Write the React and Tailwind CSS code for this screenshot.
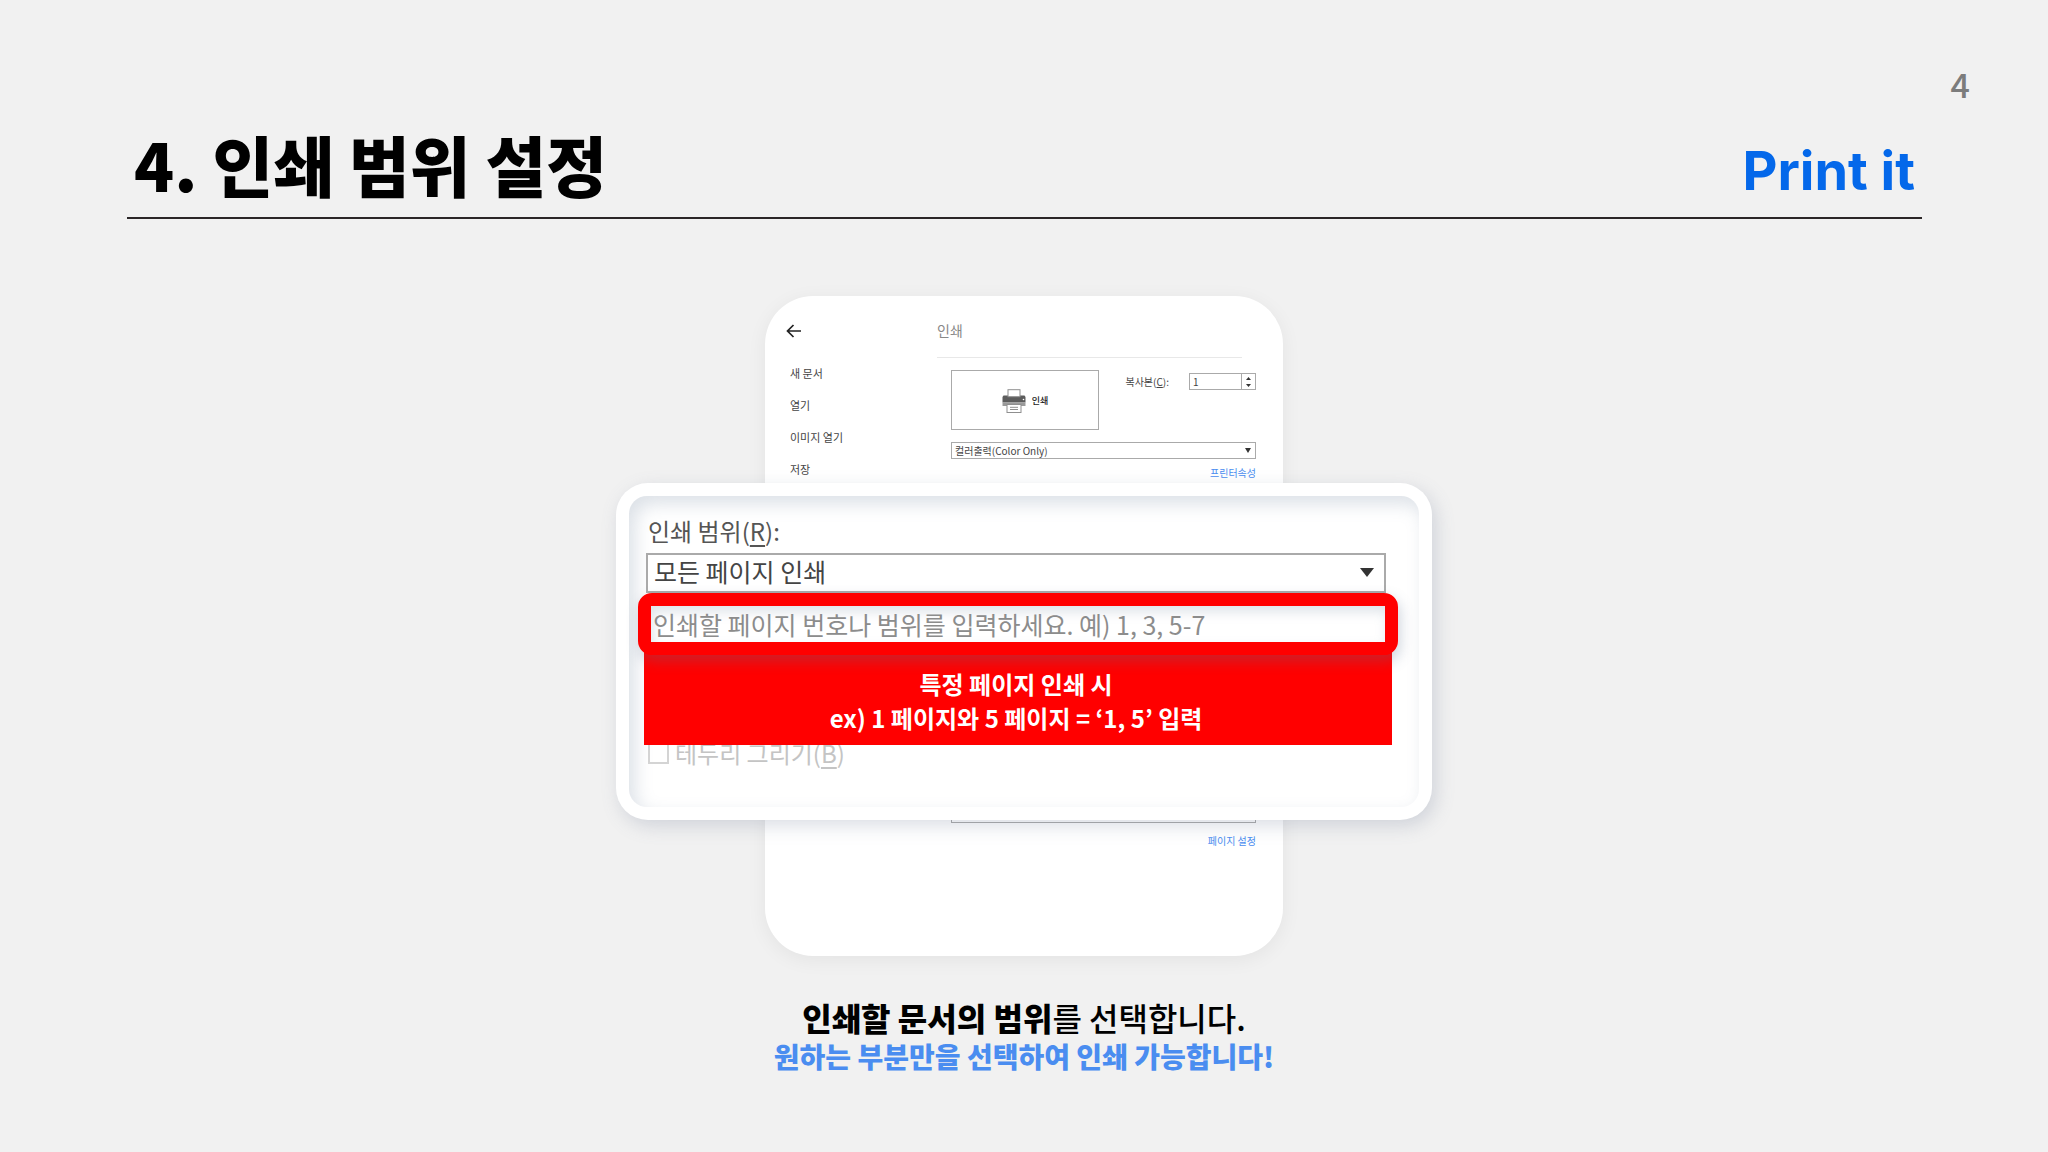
import { useState } from "react";

const menuItems = ["새 문서", "열기", "이미지 열기", "저장"];

function Caret({ className }) {
  return (
    <svg viewBox="0 0 14 9" preserveAspectRatio="none" className={className} aria-hidden="true">
      <path d="M0 0h14L7 9z" fill="currentColor" />
    </svg>
  );
}

function BackIcon() {
  return (
    <svg viewBox="0 0 16 14" className="w-4 h-3.5" fill="none" stroke="currentColor" strokeWidth="1.7" aria-hidden="true">
      <path d="M15 7H1.5M7.5 1l-6 6 6 6" />
    </svg>
  );
}

function PrinterIcon() {
  return (
    <svg viewBox="0 0 24 24" className="w-6 h-6" aria-hidden="true">
      <path d="M1.5 6.5h21l1 1.5v5.5H0.5V8z" fill="#5c5c5c" />
      <path d="M0.5 13.5h23V17h-23z" fill="#9a9a9a" />
      <rect x="6" y="0.7" width="12" height="7" fill="#fff" stroke="#8f8f8f" strokeWidth="1" />
      <circle cx="21.5" cy="10.5" r="0.8" fill="#fff" />
      <rect x="5" y="15.5" width="14" height="8" fill="#fff" stroke="#8f8f8f" strokeWidth="1" />
      <path d="M8 18.3h8M8 20.5h8" stroke="#8f8f8f" strokeWidth="1" />
    </svg>
  );
}

function PhoneScreen() {
  const [copies, setCopies] = useState(1);

  return (
    <div className="flex bg-white rounded-[48px] pt-5 pb-[107px] pr-[27px] text-[#444] shadow-[0_4px_20px_rgba(0,0,0,0.06)]">
      {/* Side menu */}
      <nav className="w-[172px] shrink-0 pl-[21px]">
        <button type="button" aria-label="뒤로" className="flex items-center h-[30px] text-[#222]">
          <BackIcon />
        </button>
        <ul className="flex flex-col gap-4 mt-[19px] pl-1 text-[11px] leading-4">
          {menuItems.map((item) => (
            <li key={item}>
              <a href="#">{item}</a>
            </li>
          ))}
        </ul>
      </nav>

      {/* Print panel */}
      <div className="flex-1">
        <h2 className="text-sm leading-7 text-[#888]">인쇄</h2>
        <hr className="mt-[13px] mr-3.5 border-[#e8e8e8]" />
        <div className="pl-[14px] pt-3 text-[10px] leading-4">
          <div className="flex justify-between items-start">
            <button
              type="button"
              className="flex items-center justify-center gap-1.5 w-[148px] h-[60px] pt-0.5 border border-[#aaa] text-[9px] font-medium text-[#222]"
            >
              <PrinterIcon />
              인쇄
            </button>
            <div className="flex items-center gap-5 pt-[3px]">
              <label htmlFor="copies">
                복사본(<u>C</u>):
              </label>
              <div className="flex w-[67px] h-[17px] border border-[#aaa]">
                <input
                  id="copies"
                  value={copies}
                  onChange={(e) => setCopies(Number(e.target.value) || 1)}
                  className="flex-1 min-w-0 pl-[3px] focus:outline-none"
                />
                <div className="flex flex-col items-center justify-center gap-1 w-[14px] border-l border-[#aaa] text-[#333]">
                  <button type="button" aria-label="늘리기" onClick={() => setCopies(copies + 1)}>
                    <Caret className="block w-[5px] h-[3px] rotate-180" />
                  </button>
                  <button type="button" aria-label="줄이기" onClick={() => setCopies(Math.max(1, copies - 1))}>
                    <Caret className="block w-[5px] h-[3px]" />
                  </button>
                </div>
              </div>
            </div>
          </div>

          <div className="relative mt-3">
            <select aria-label="프린터" className="block appearance-none w-full h-[17px] pl-[3px] border border-[#aaa] leading-[15px]">
              <option>컬러출력(Color Only)</option>
            </select>
            <Caret className="absolute right-[5px] top-[6px] w-1.5 h-[5px] text-[#333] pointer-events-none" />
          </div>
          <div className="flex justify-end mt-1.5">
            <a href="#" className="text-[#4a8df0]">프린터속성</a>
          </div>

          <div className="mt-[325px]">
            <select aria-label="용지" className="block appearance-none w-full h-[17px] pl-[3px] border border-[#aaa] leading-[15px]">
              <option>A4</option>
            </select>
          </div>
          <div className="flex justify-end mt-2.5">
            <a href="#" className="text-[#4a8df0]">페이지 설정</a>
          </div>
        </div>
      </div>
    </div>
  );
}

function RangePanel() {
  return (
    <div className="absolute top-[187px] left-1/2 -translate-x-1/2 w-[816px] p-[13px] bg-white rounded-[32px] shadow-[4px_6px_18px_rgba(110,125,150,0.25)]">
      <div className="rounded-[18px] pt-4 pb-9 pl-[17px] pr-[21px] text-2xl text-[#555] shadow-[inset_6px_8px_18px_rgba(110,130,155,0.24)]">
        <label htmlFor="range" className="block leading-[38px] pl-0.5">
          인쇄 범위(<u className="underline-offset-4">R</u>):
        </label>
        <div className="relative mt-[3px] mr-3">
          <select
            id="range"
            className="block appearance-none w-full h-10 pl-1.5 pb-1 border-2 border-[#aaa] bg-white text-[25px] text-[#444] leading-8"
          >
            <option>모든 페이지 인쇄</option>
          </select>
          <Caret className="absolute right-3 top-[15px] w-[14px] h-[9px] text-[#333] pointer-events-none" />
        </div>

        {/* Highlighted page range field */}
        <div className="relative z-20 -ml-2 border-[13px] border-[#ff0000] rounded-[14px] shadow-[2px_6px_14px_rgba(90,110,140,0.3)]">
          <input
            aria-label="페이지 번호"
            placeholder="인쇄할 페이지 번호나 범위를 입력하세요. 예) 1, 3, 5-7"
            className="block w-full h-9 pl-0.5 bg-white text-[25px] placeholder:text-[#8c8c8c] shadow-[inset_2px_6px_12px_rgba(110,130,155,0.22)] focus:outline-none"
          />
        </div>
        <div className="relative z-10 -mt-2 -ml-0.5 mr-1.5 pt-5 pb-2.5 pr-1 bg-[#ff0000] text-center text-2xl leading-[34px] font-bold text-white">
          <p>특정 페이지 인쇄 시</p>
          <p>ex) 1 페이지와 5 페이지 = ‘1, 5’ 입력</p>
        </div>
        <label className="flex items-center gap-1.5 -mt-2.5 pl-0.5 h-9 text-[#c4c4c4]">
          <input type="checkbox" className="appearance-none w-[21px] h-[21px] border-2 border-[#d4d4d4]" />
          <span>
            테두리 그리기(<u className="underline-offset-4">B</u>)
          </span>
        </label>
      </div>
    </div>
  );
}

export default function App() {
  return (
    <main className="min-h-screen bg-[#f1f1f1] pt-[60px] pb-16 font-['Noto_Sans_CJK_KR',sans-serif]">
      <p className="pr-[78px] text-right text-[34px] leading-[48px] font-medium text-[#7c7c7c]">4</p>

      <header className="flex items-end justify-between ml-[127px] mr-[126px] h-[111px] px-[7px] pb-3.5 border-b-2 border-[#2b2627]">
        <h1 className="text-[66px] leading-[80px] font-black text-black">4. 인쇄 범위 설정</h1>
        <span className="font-['Inter',sans-serif] text-[54px] leading-[64px] font-bold text-[#0468ea]">Print it</span>
      </header>

      <div className="relative w-[518px] mx-auto mt-[77px]">
        <PhoneScreen />
        <RangePanel />
      </div>

      <div className="mt-10 text-center">
        <p className="text-[32px] leading-[42px] font-medium text-black">
          <strong className="font-black">인쇄할 문서의 범위</strong>를 선택합니다.
        </p>
        <p className="text-[28px] leading-9 font-black text-[#4a8df0]">원하는 부분만을 선택하여 인쇄 가능합니다!</p>
      </div>
    </main>
  );
}
